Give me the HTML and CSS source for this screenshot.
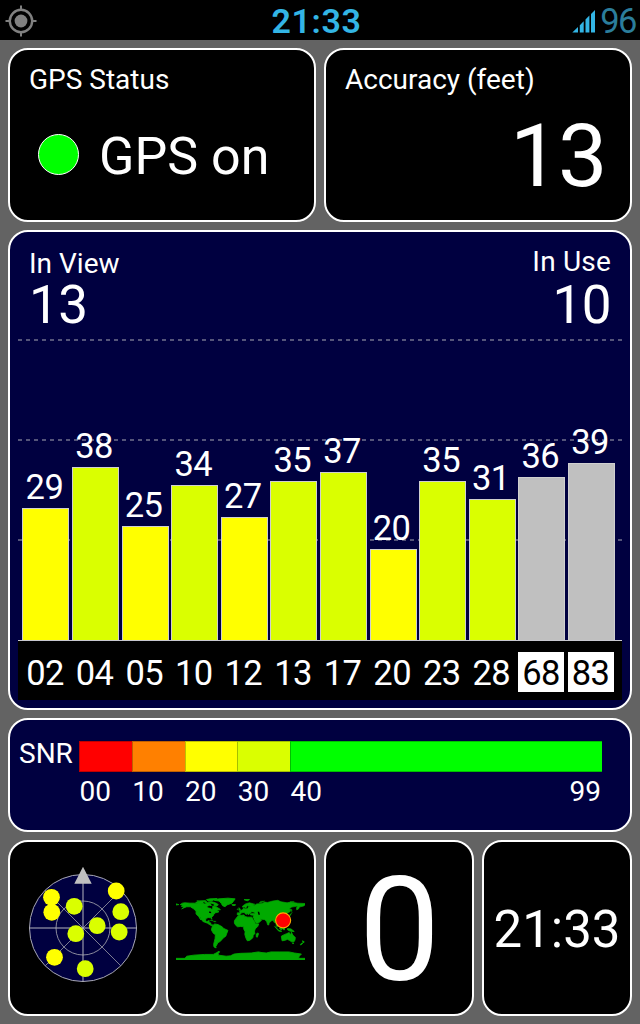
FILE: index.html
```
<!DOCTYPE html>
<html lang="en">
  <head>
      <meta charset="UTF-8">
      <meta name="viewport" content="width=device-width, initial-scale=1.0">
      <title>GPS Status</title>
      <link rel="stylesheet" href="styles.css">
  </head>
  <body>
    <header class="status-bar">
      <svg class="gps-icon" viewBox="-16 -16 32 32">
        <circle r="11.2" fill="none" stroke="#808080" stroke-width="2.4"/>
        <circle r="6.4" fill="#808080"/>
        <path d="M0-15.5V-10.5M0 10.5V15.5M-15.5 0H-10.5M10.5 0H15.5" stroke="#808080" stroke-width="2"/>
      </svg>
      <div class="clock">21:33</div>
      <div class="status-right">
        <svg class="signal" viewBox="0 0 24 24">
          <path d="M.3 23.5L6 18V23.5ZM7.8 23.5V16.2L11.7 12.3V23.5ZM13.5 23.5V10.5L17.4 6.6V23.5ZM19 23.5V5L23 1V23.5Z" fill="#33b5e5"/>
        </svg>
        <span class="battery">96</span>
      </div>
    </header>

    <main class="panels">
      <div class="row">
        <section class="card top-card">
          <h2 class="title">GPS Status</h2>
          <div class="gps-state"><span class="led"></span>GPS on</div>
        </section>
        <section class="card top-card">
          <h2 class="title">Accuracy (feet)</h2>
          <div class="accuracy">13</div>
        </section>
      </div>

      <section class="card navy chart">
        <div class="chart-head">
          <div>
            <h2 class="title">In View</h2>
            <div class="count">13</div>
          </div>
          <div class="in-use">
            <h2 class="title">In Use</h2>
            <div class="count">10</div>
          </div>
        </div>
        <div class="plot">
          <div class="sat"><span>29</span><div class="bar yellow" style="height: 132px"></div></div>
          <div class="sat"><span>38</span><div class="bar lime" style="height: 173px"></div></div>
          <div class="sat"><span>25</span><div class="bar yellow" style="height: 114px"></div></div>
          <div class="sat"><span>34</span><div class="bar lime" style="height: 155px"></div></div>
          <div class="sat"><span>27</span><div class="bar yellow" style="height: 123px"></div></div>
          <div class="sat"><span>35</span><div class="bar lime" style="height: 159px"></div></div>
          <div class="sat"><span>37</span><div class="bar lime" style="height: 168px"></div></div>
          <div class="sat"><span>20</span><div class="bar yellow" style="height: 91px"></div></div>
          <div class="sat"><span>35</span><div class="bar lime" style="height: 159px"></div></div>
          <div class="sat"><span>31</span><div class="bar lime" style="height: 141px"></div></div>
          <div class="sat"><span>36</span><div class="bar gray" style="height: 163px"></div></div>
          <div class="sat"><span>39</span><div class="bar gray" style="height: 177px"></div></div>
        </div>
        <div class="prns">
          <span>02</span><span>04</span><span>05</span><span>10</span><span>12</span><span>13</span>
          <span>17</span><span>20</span><span>23</span><span>28</span>
          <span class="glonass">68</span><span class="glonass">83</span>
        </div>
      </section>

      <section class="card navy snr">
        <div class="snr-label">SNR</div>
        <div class="scale">
          <div class="step red"></div>
          <div class="step orange"></div>
          <div class="step yellow"></div>
          <div class="step lime"></div>
          <div class="step green"></div>
          <span>00</span>
          <span>10</span>
          <span>20</span>
          <span>30</span>
          <span class="ends"><b>40</b><b>99</b></span>
        </div>
      </section>

      <div class="row bottom">
        <section class="card tile">
          <svg class="radar" viewBox="-62 -62 124 124">
            <circle r="53.5" fill="#000040" stroke="#a9a9b4"/>
            <circle r="27" fill="none" stroke="#8a8a9c"/>
            <path d="M-38-38L38 38M38-38L-38 38" stroke="#8a8a9c" stroke-width=".9"/>
            <path d="M0-53.5V53.5M-53.5 0H53.5" stroke="#b4b4be"/>
            <path d="M0-61.3L8.7-44.3H-8.7Z" fill="#c0c0c0"/>
            <g fill="#ff0">
              <circle cx="-31.5" cy="-30.7" r="8.4"/>
              <circle cx="-31.2" cy="-15.7" r="8.4"/>
              <circle cx="33.2" cy="-37" r="8.4"/>
              <circle cx="-28.5" cy="29.3" r="8.4"/>
            </g>
            <g fill="#daff00">
              <circle cx="-8.8" cy="-21.7" r="8.4"/>
              <circle cx="37.8" cy="-16.3" r="8.4"/>
              <circle cx="36.2" cy="4" r="8.4"/>
              <circle cx="14.2" cy="-2.3" r="8.4"/>
              <circle cx="-7.2" cy="5.7" r="8.4"/>
              <circle cx="2.2" cy="40.7" r="8.4"/>
            </g>
          </svg>
        </section>
        <section class="card tile">
          <!-- plain lon/lat map, y is -lat -->
          <svg class="map" viewBox="-180 -90 360 180">
            <g fill="#00aa00" stroke="#00aa00" stroke-width="2.4">
              <path d="M-168-66L-162-70L-156-71L-141-70L-128-70L-115-69L-108-68L-97-68L-94-72L-85-69L-82-67L-87-64L-94-61L-92-57L-82-55L-80-51L-78-55L-77-60L-78-62L-70-61L-65-58L-60-55L-56-52L-66-50L-65-48L-60-46L-66-44L-70-43L-74-40L-76-35L-81-31L-80-25L-82-29L-90-30L-97-27L-97-21L-94-18L-90-21L-87-21L-89-16L-83-15L-83-10L-77-9L-80-7L-86-10L-92-14L-105-19L-112-29L-115-31L-110-23L-117-33L-124-40L-124-48L-132-55L-140-60L-150-60L-158-57L-164-54L-157-59L-165-61L-161-64Z"/>
              <path d="M-73-78L-68-80L-60-82L-35-84L-15-82L-20-75L-24-70L-38-65L-43-60L-50-63L-54-70L-60-76Z"/>
              <path d="M-125-72L-115-73L-105-73L-103-69L-116-69ZM-90-73L-80-74L-68-70L-62-66L-66-62L-74-64L-73-68L-86-71ZM-122-76L-98-77L-95-75L-115-74.5ZM-95-80L-85-82L-65-83L-75-79L-82-76L-92-77ZM-100-73L-95-74L-94-71L-99-71ZM-86-65L-81-64L-83-62ZM-24-66L-14-66L-15-63.5L-22-63.5ZM10-80L25-80L20-77L14-78ZM-180-68L-172-66L-180-65Z"/>
              <path d="M-85-22L-75-20L-74-19L-80-23ZM-74-20L-68-19L-69-18L-74-18Z" stroke-width="1"/>
              <path d="M-77-8L-72-12L-62-10L-51-4L-48 0L-35 6L-39 16L-41 22L-48 27L-54 34L-58 38L-63 40L-66 46L-69 51L-68 55L-74 52L-75 45L-73 37L-71 29L-70 18L-76 14L-81 5L-80-1Z"/>
              <path d="M-17-14L-17-21L-12-28L-6-35L10-37L11-33L20-31L31-31L34-28L39-18L43-12L51-12L48-5L41 2L39 8L40 15L35 20L35 25L31 30L25 34L19 35L15 27L12 17L13 10L9 2L9-4L0-5L-8-4L-13-8ZM44 16L49 13L50 16L47 25L44 24Z"/>
              <path d="M-9-37L-9-43L-2-43L-1-46L-4-48L2-50L8-54L8-57L11-56L12-54L20-55L22-59L30-60L25-61L22-61L21-64L25-66L20-63L17-60L15-56L11-59L5-59L6-62L14-68L25-71L40-67L34-65L40-64L45-68L60-69L68-73L75-72L90-76L104-78L113-74L130-71L140-73L160-70L180-69L180-65L176-62L164-59L163-55L157-51L156-57L160-62L143-59L136-54L141-52L139-47L133-43L129-41L129-35L126-35L125-39L121-39L122-31L117-23L109-21L108-15L109-11L105-9L101-13L103-3L100-7L98-16L94-16L91-22L87-21L80-15L79-9L76-9L73-18L68-24L58-25L50-29L56-26L59-22L52-16L44-13L39-21L35-28L36-36L28-37L27-40L30-41L41-41L38-45L31-46L28-42L23-40L23-37L20-40L14-45L18-41L16-38L10-44L3-43L-2-37Z" stroke-width="1.8"/>
              <path d="M-5-50L1-51L-2-56L-5-58L-4-54ZM-10-52L-6-52L-6-55L-9-54ZM52-71L58-71L68-76L56-75ZM138-74L150-75L148-73ZM142-54L144-50L143-46L142-48ZM130-32L136-34L141-37L141-42L145-44L140-40L134-35Z" stroke-width="1"/>
              <path d="M96-5L106 5L105 6L99-1ZM106 6L115 8L114 9L106 7.5ZM109-1L117-6L118 1L115 4L110 2ZM120-1L124-1L122 5L120 4ZM131 1L141 2L150 9L146 9L138 8L131 4ZM121-18L122-14L126-8L123-8L120-15Z"/>
              <path d="M114 22L122 18L129 15L136 12L137 16L141 17L142 11L146 19L153 26L152 33L149 38L143 38L137 34L131 31L123 34L116 35ZM145 41L148 41L147 44ZM173 35L178 38L175 41ZM172 41L174 42L168 47L167 45Z"/>
              <path d="M-180 84L-155 84L-150 78L-130 75L-100 73L-76 73L-68 69L-60 64L-58 66L-62 70L-62 75L-40 78L-28 77L-18 72L0 70L30 69L50 66L60 68L72 69L85 66L110 66L135 66L150 69L170 72L164 78L162 84L180 84V90H-180Z"/>
            </g>
            <path d="M48-46L52-46L54-40L54-38L50-38ZM-88-47L-82-46L-82-42L-88-43ZM34-28L39-21L43-13L45-12L40-19L36-28Z" fill="#000"/>
            <circle cx="119" cy="-22" r="21" fill="#ff0000" stroke="#ffaa00" stroke-width="3"/>
          </svg>
        </section>
        <section class="card tile speed">0</section>
        <section class="card tile time">21:33</section>
      </div>
    </main>
  </body>
</html>
```
FILE: styles.css
```
* {
    box-sizing: border-box;
}

body {
    font-family: Roboto, "Liberation Sans", sans-serif;
    margin: 0;
    height: 1024px;
    background-color: #636363;
    color: #ffffff;
    overflow: hidden;
}

.status-bar {
    display: grid;
    grid-template-columns: 1fr auto 1fr;
    align-items: center;
    height: 40px;
    padding: 0 3px 0 5px;
    background-color: #000000;
    color: #33b5e5;
    font-size: 34px;
    line-height: 40px;
}

.gps-icon {
    width: 32px;
    height: 32px;
}

.clock {
    font-weight: 600;
    margin-right: 9px;
    padding-top: 1px;
    letter-spacing: 0.6px;
}

.status-right {
    display: flex;
    justify-content: flex-end;
    align-items: center;
    gap: 4px;
}

.signal {
    width: 24px;
    height: 24px;
}

.battery {
    color: #2b7d9b;
    font-size: 34.5px;
    letter-spacing: -1.5px;
    margin-right: 1px;
    padding-top: 1px;
}

.panels {
    display: grid;
    grid-template-rows: 174px 480px 114px 176px;
    gap: 8px;
    padding: 8px;
}

.row {
    display: grid;
    grid-template-columns: 1fr 1fr;
    gap: 8px;
}

.row.bottom {
    grid-template-columns: repeat(4, 1fr);
}

.card {
    background-color: #000000;
    border: 2px solid #ffffff;
    border-radius: 20px;
    overflow: hidden;
}

.navy {
    background-color: #000040;
}

.title {
    margin: 0;
    font-size: 28px;
    font-weight: 400;
    line-height: 32px;
}

.top-card {
    padding: 14px 24px 0 19px;
}

.gps-state {
    display: flex;
    align-items: center;
    margin-top: 31px;
    font-size: 52px;
    line-height: 60px;
}

.led {
    width: 41px;
    height: 41px;
    margin: 0 20px 5px 9px;
    background-color: #00ff00;
    border: 1.5px solid #ffffff;
    border-radius: 50%;
}

.accuracy {
    margin-top: 10px;
    font-size: 88px;
    line-height: 100px;
    letter-spacing: -1.5px;
    text-align: right;
}

.chart {
    padding: 16px 8px 0;
}

.chart-head {
    display: flex;
    justify-content: space-between;
    height: 81px;
    padding: 0 11px;
}

.in-use {
    text-align: right;
}

.count {
    font-size: 53px;
    line-height: 50px;
    letter-spacing: -0.5px;
}

.in-use .title {
    margin-top: -2px;
    margin-bottom: 2px;
    letter-spacing: 0.2px;
}

/* dashed grid lines every 100px */
.plot {
    display: flex;
    align-items: flex-end;
    gap: 2.6px;
    height: 312px;
    padding-left: 4.4px;
    border-bottom: 1px solid #c8c8d0;
    background-image:
        linear-gradient(#000040 10px, transparent 10px, transparent 12px, #000040 12px, #000040 110px, transparent 110px, transparent 112px, #000040 112px, #000040 210px, transparent 210px, transparent 212px, #000040 212px),
        repeating-linear-gradient(90deg, #55557a 0, #55557a 4.5px, #000040 4.5px, #000040 8px);
}

.sat {
    width: 47px;
    font-size: 34.5px;
    line-height: 40px;
    letter-spacing: -0.6px;
    text-align: center;
}

.sat span {
    display: block;
    margin: 0 0 1px -3px;
}

.bar {
    border: 1px solid #d0d0d0;
    border-bottom: none;
}

.red { background-color: #ff0000; }
.orange { background-color: #ff8000; }
.yellow { background-color: #ffff00; }
.lime { background-color: #daff00; }
.green { background-color: #00ff00; }
.gray { background-color: #c0c0c0; }

.prns {
    display: flex;
    gap: 3.6px;
    height: 59px;
    padding: 11px 0 0 4px;
    background-color: #000000;
    font-size: 34.5px;
    line-height: 42px;
    letter-spacing: -0.6px;
    text-align: center;
}

.prns span {
    width: 46px;
    height: 40px;
}

.glonass {
    background-color: #ffffff;
    color: #000000;
}

.snr {
    display: flex;
    padding: 21px 28px 0 9px;
    font-size: 28px;
}

.snr-label {
    width: 60px;
    line-height: 25px;
}

.scale {
    display: grid;
    grid-template-columns: repeat(4, 52.75px) 1fr;
    grid-template-rows: 31px 40px;
    flex: 1;
    line-height: 40px;
}

.scale span {
    padding-left: 0.6px;
}

.step {
    border: 1px solid rgba(0, 0, 0, 0.25);
    border-width: 1px 0 1px 1px;
}

.ends {
    display: flex;
    justify-content: space-between;
}

.ends b {
    font-weight: 400;
}

.ends b:last-child {
    margin-right: 1px;
}

.tile {
    display: flex;
    align-items: center;
    justify-content: center;
}

.radar {
    width: 124px;
    height: 124px;
}

.map {
    width: 129px;
    height: 64.5px;
    margin-right: 2px;
}

.speed {
    font-size: 145px;
    line-height: 172px;
    padding: 3px 0 0 1px;
}

.time {
    font-size: 51px;
    padding-top: 3px;
}
```
